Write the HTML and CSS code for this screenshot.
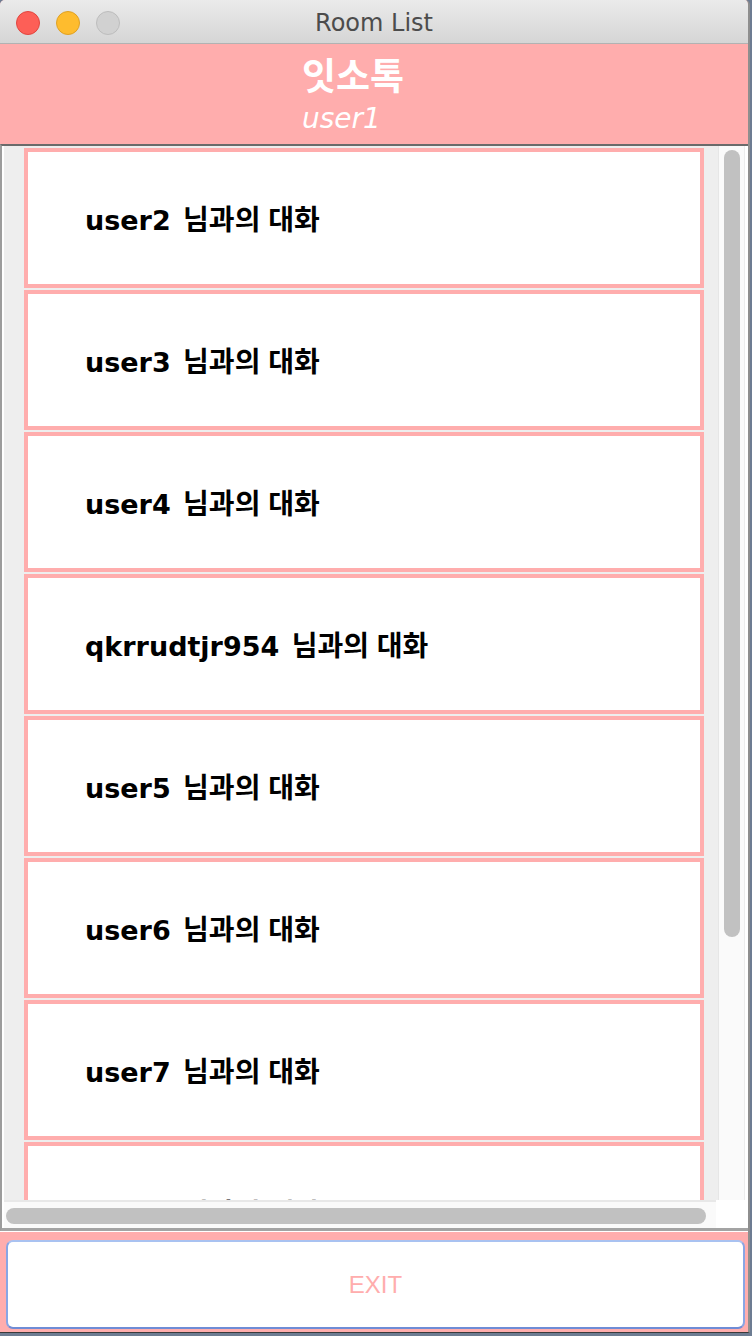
FILE: index.html
```html
<!DOCTYPE html>
<html lang="ko">
<head>
<meta charset="utf-8">
<title>Room List</title>
<link rel="stylesheet" href="styles.css">
</head>
<body>
<div class="window">
  <div class="titlebar">
    <div class="lights">
      <span class="light red"></span>
      <span class="light yellow"></span>
      <span class="light gray"></span>
    </div>
    <div class="title">Room List</div>
    <div class="spacer"></div>
  </div>
  <div class="header">
    <div class="app-name">잇소톡</div>
    <div class="user-name">user1</div>
  </div>
  <div class="pane">
    <div class="pane-main">
      <div class="viewport">
        <div class="room"><span class="room-label">user2 <span class="ko">님과의 대화</span></span></div>
        <div class="room"><span class="room-label">user3 <span class="ko">님과의 대화</span></span></div>
        <div class="room"><span class="room-label">user4 <span class="ko">님과의 대화</span></span></div>
        <div class="room"><span class="room-label">qkrrudtjr954 <span class="ko">님과의 대화</span></span></div>
        <div class="room"><span class="room-label">user5 <span class="ko">님과의 대화</span></span></div>
        <div class="room"><span class="room-label">user6 <span class="ko">님과의 대화</span></span></div>
        <div class="room"><span class="room-label">user7 <span class="ko">님과의 대화</span></span></div>
        <div class="room"><span class="room-label">user8 <span class="ko">님과의 대화</span></span></div>
      </div>
      <div class="vscroll"><div class="vthumb"></div></div>
    </div>
    <div class="hbar">
      <div class="htrack"><div class="hthumb"></div></div>
      <div class="corner"></div>
    </div>
  </div>
  <div class="footer">
    <button class="exit">EXIT</button>
  </div>
</div>
</body>
</html>
```
FILE: styles.css
```css
html, body {
  margin: 0;
  padding: 0;
}
body {
  background: #6d7c92;
  width: 752px;
  height: 1336px;
  overflow: hidden;
}
.window {
  width: 748px;
  height: 1332px;
  border-right: 2px solid #8e8e8e;
  border-bottom: 1px solid #3a3a3a;
  background: #ffadad;
  border-top-left-radius: 5px;
  border-top-right-radius: 5px;
  overflow: hidden;
  display: flex;
  flex-direction: column;
}
.titlebar {
  height: 43px;
  border-bottom: 1px solid #b2b2b2;
  background: linear-gradient(#ebebeb, #d5d5d5);
  display: grid;
  grid-template-columns: 1fr auto 1fr;
  align-items: center;
  flex: none;
}
.lights {
  display: flex;
  gap: 16px;
  padding-left: 16px;
  padding-top: 1px;
}
.light {
  width: 22px;
  height: 22px;
  border-radius: 50%;
  border: 1px solid;
  display: block;
}
.red { background: #fd5f57; border-color: #e1463f; }
.yellow { background: #febc2e; border-color: #dfa124; }
.gray { background: #d1d1d1; border-color: #bdbdbd; }
.title {
  font-family: "DejaVu Sans", sans-serif;
  font-size: 24px;
  color: #4c4c4c;
  line-height: 43px;
  padding-top: 2px;
}
.header {
  height: 100px;
  box-sizing: border-box;
  padding: 11px 0 0 302px;
  color: #ffffff;
  flex: none;
}
.app-name {
  font-family: "Noto Sans CJK KR", sans-serif;
  font-weight: bold;
  font-size: 37px;
  line-height: 38px;
}
.user-name {
  font-family: "DejaVu Sans", sans-serif;
  font-style: italic;
  font-size: 28px;
  line-height: 32px;
  margin-top: 10px;
}
.pane {
  flex: none;
  background: #ffffff;
  border-top: 2px solid #6a6a6a;
  border-left: 2px solid #9c9c9c;
  border-bottom: 3px solid #a3a3a3;
  padding: 0 3px 0 2px;
  width: 741px;
}
.pane-main {
  display: flex;
  height: 1054px;
}
.viewport {
  width: 714px;
  height: 1054px;
  background: #eeeeee;
  overflow: hidden;
  box-sizing: border-box;
  padding: 2px 14px 0 20px;
  display: flex;
  flex-direction: column;
  gap: 2px;
}
.room {
  flex: none;
  height: 140px;
  box-sizing: border-box;
  border: 4px solid #ffadad;
  background: #ffffff;
  display: flex;
  align-items: center;
  padding: 3px 0 0 57px;
}
.room-label {
  font-family: "DejaVu Sans", "Noto Sans CJK KR", sans-serif;
  font-weight: bold;
  font-size: 27px;
  line-height: 30px;
  color: #000000;
  white-space: nowrap;
}
.ko {
  font-family: "Noto Sans CJK KR", sans-serif;
  font-size: 28px;
  margin-left: 3px;
}
.vscroll {
  background: #fafafa;
  border-left: 1px solid #e6e6e6;
  border-right: 1px solid #ececec;
  padding: 4px 0 0 5px;
  box-sizing: border-box;
  width: 27px;
}
.vthumb {
  width: 16px;
  height: 787px;
  border-radius: 8px;
  background: #c1c1c1;
}
.hbar {
  display: flex;
  height: 28px;
}
.htrack {
  width: 712px;
  box-sizing: border-box;
  background: #fafafa;
  border-top: 2px solid #e8e8e8;
  padding: 6px 0 0 2px;
}
.hthumb {
  width: 700px;
  height: 16px;
  border-radius: 8px;
  background: #c1c1c1;
}
.corner {
  width: 29px;
  background: #ffffff;
}
.footer {
  flex: none;
  padding: 8px 3px 4px 6px;
  border-top: 1px solid #ffffff;
  display: flex;
}
.exit {
  width: 739px;
  height: 89px;
  margin: 0;
  box-sizing: border-box;
  background: #ffffff;
  border: 2px solid #88a5e4;
  border-top-color: #a9c2f1;
  border-bottom-color: #6f8cd6;
  border-radius: 7px;
  font-family: "Liberation Sans", sans-serif;
  font-size: 24px;
  color: #ffadad;
  padding: 0;
}
```
